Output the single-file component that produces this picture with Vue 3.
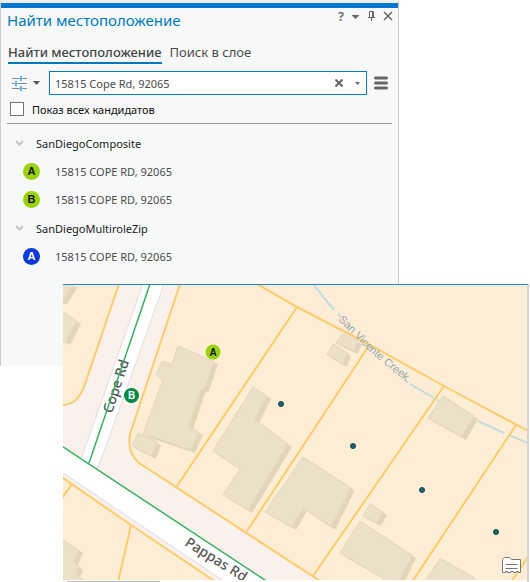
<script setup>
import { ref } from 'vue'

const query = ref('15815 Cope Rd, 92065')
const showAll = ref(false)

const groups = [
  {
    name: 'SanDiegoComposite',
    items: [
      { letter: 'A', tone: 'lime', address: '15815 COPE RD, 92065' },
      { letter: 'B', tone: 'lime', address: '15815 COPE RD, 92065' },
    ],
  },
  {
    name: 'SanDiegoMultiroleZip',
    items: [{ letter: 'A', tone: 'blue', address: '15815 COPE RD, 92065' }],
  },
]

const buildings = [
  '55,284 74,284 63,301 55,301',
  '55,307 63,312 77,321 66,342 55,336',
  '178,346 214,361 205,388 201,390 189,427 199,432 191,450 143,434 163,380 156,375 162,361 172,364',
  '138,433 157,442 152,456 132,446',
  '253,387 267,396 255,420 288,444 248,510 223,495 240,469 213,451',
  '303,457 350,487 348,493 331,527 303,508 292,527 265,512',
  '342,334 358,341 354,351 336,343',
  '333,344 347,353 343,364 327,355',
  '443,396 474,416 462,437 428,418',
  '370,504 383,512 377,523 363,516',
  '360,521 412,555 398,584 386,580 340,553',
  '440,558 473,577 480,584 424,584',
  '55,535 63,540 79,550 74,562 79,567 76,574 88,584 55,584',
]

const parcelLines = [
  'M119 284 L84 387 Q77 405 63 405',
  'M180 284 L130 434 Q127 453 139 463 L320 581',
  'M257 284 L297 307 L370 345 L444 386 L530 432',
  'M297 307 L177 486',
  'M368 347 L247 531',
  'M444 386 L313 576',
  'M516 425 L412 582',
  'M530 554 L511 582',
  'M60 476 L131 525 L216 582',
  'M72 484 L62 498',
  'M131 525 L118 582',
]

const dots = [
  [281, 404],
  [353, 446],
  [422, 490],
  [496, 532],
]
</script>

<template>
  <main class="page">
    <section class="pane">
      <header class="pane-head">
        <h1>Найти местоположение</h1>
        <div class="window-tools">
          <button type="button" class="help" aria-label="Справка">?</button>
          <button type="button" aria-label="Параметры панели">
            <svg width="9" height="12" viewBox="0 0 9 12"><path d="M0.5 5h8L4.500 9z" fill="#666" /></svg>
          </button>
          <button type="button" aria-label="Закрепить">
            <svg width="9" height="12" viewBox="0 0 9 12" fill="none" stroke="#666"><path d="M2.500 7V1.500h4V7M1 7.500h7M4.500 7.500V11" /><path d="M5.500 2v5" /></svg>
          </button>
          <button type="button" aria-label="Закрыть">
            <svg width="10" height="12" viewBox="0 0 10 12"><path d="M1 2l8 8M9 2l-8 8" stroke="#666" stroke-width="1.500" /></svg>
          </button>
        </div>
      </header>

      <nav class="tabs">
        <button type="button" class="tab active">Найти местоположение</button>
        <button type="button" class="tab">Поиск в слое</button>
      </nav>

      <div class="search-row">
        <button type="button" class="filter" aria-label="Фильтр">
          <svg width="15" height="16" viewBox="0 0 15 16">
            <path d="M0 3.500h15M0 8.500h15M0 13.500h15" stroke="#8a8a8a" />
            <path d="M9 1v5M4 6v5M9 11v5" stroke="#6ab6e2" stroke-width="2" />
            <path d="M7 3.500h4M2 8.500h4M7 13.500h4" stroke="#6ab6e2" />
          </svg>
          <svg width="7" height="4" viewBox="0 0 7 4"><path d="M0 0h7L3.500 4z" fill="#555" /></svg>
        </button>
        <div class="search-box">
          <input v-model="query" type="text" aria-label="Адрес" />
          <button type="button" aria-label="Очистить" @click="query = ''">
            <svg width="8" height="8" viewBox="0 0 8 8"><path d="M0.500 0.500l7 7M7.500 0.500l-7 7" stroke="#666" stroke-width="2" /></svg>
          </button>
          <button type="button" aria-label="История">
            <svg width="5" height="3" viewBox="0 0 5 3"><path d="M0 0h5L2.500 3z" fill="#666" /></svg>
          </button>
        </div>
        <button type="button" class="menu" aria-label="Меню">
          <svg width="14" height="14" viewBox="0 0 14 14"><path d="M1.500 2h11M1.500 7h11M1.500 12h11" stroke="#666" stroke-width="3" stroke-linecap="round" /></svg>
        </button>
      </div>

      <label class="show-all">
        <input v-model="showAll" type="checkbox" />
        <span>Показ всех кандидатов</span>
      </label>

      <div class="results">
        <section v-for="group in groups" :key="group.name">
          <h2>
            <svg width="9" height="6" viewBox="0 0 9 6"><path d="M1 1l3.500 3.500L8 1" fill="none" stroke="#c4c4c4" stroke-width="2" /></svg>
            {{ group.name }}
          </h2>
          <ul>
            <li v-for="item in group.items" :key="item.letter">
              <span class="badge" :class="item.tone">{{ item.letter }}</span>
              <span>{{ item.address }}</span>
            </li>
          </ul>
        </section>
      </div>
    </section>

    <section class="map">
      <svg class="map-canvas" viewBox="63 285 464 295" role="img" aria-label="Карта">
        <rect x="63" y="285" width="464" height="295" fill="#feedd5" />
        <path d="M119 284 L84 387 Q77 405 63 405 V476 L131 525 L216 582 H320 L139 463 Q127 453 130 434 L180 284Z" fill="#fbf1ec" />
        <path d="M143 284 L80 462 L97 470 L110 435 L164 284Z" fill="#fff" stroke="#dedede" />
        <path d="M60 445 L268 582 H225 L60 471Z" fill="#fff" />
        <path d="M60 471 L225 582" stroke="#dcdad8" fill="none" />
        <g fill="#e2d6b9">
          <polygon v-for="(points, i) in buildings" :key="i" :points="points" transform="translate(4 3)" />
        </g>
        <g fill="#ebe0c8" stroke="#e3d8bd">
          <polygon v-for="(points, i) in buildings" :key="i" :points="points" />
        </g>
        <path
          d="M313 284 L334 310 M338 314 L341 317 M405 380 L408 383 M410 384 L439 401 M478 421 L504 433 M509 435 L530 444"
          fill="none"
          stroke="#c3dddf"
          stroke-width="2"
        />
        <g fill="none" stroke="#fccb6a" stroke-width="2">
          <path v-for="line in parcelLines" :key="line" :d="line" />
        </g>

        <path id="creek" d="M338 320 L368 350 Q382 363 412 386" fill="none" />
        <text class="creek-label"><textPath href="#creek">San Vicente Creek</textPath></text>
        <text class="road-label" transform="translate(112 414) rotate(-72)">Cope Rd</text>
        <text class="road-label" transform="translate(184 545) rotate(32)">Pappas Rd</text>
        <path d="M150 284 L89 463 M60 445 L268 582" fill="none" stroke="#37b164" stroke-width="1.500" />

        <g fill="#1a6570" stroke="#173f45">
          <circle v-for="[x, y] in dots" :key="x" :cx="x" :cy="y" r="2.500" />
        </g>
        <circle cx="213" cy="352" r="7.500" fill="#9bd300" />
        <text class="pin" x="213" y="356">A</text>
        <circle cx="131.500" cy="395.500" r="7.500" fill="#008a45" />
        <text class="pin light" x="131.500" y="399">B</text>

        <g stroke="#777" fill="#fff">
          <path d="M502.500 559.500l2-2h5l2 2h9v13h-2v-1h-2v1h-3v-1h-3v1h-3v-1h-2v1h-3z" />
          <path d="M505.500 564.500h12M505.500 568.500h12" />
        </g>
      </svg>
      <div class="scroll-thumb"></div>
    </section>
  </main>
</template>

<style>
body {
  margin: 0;
  background: #fff;
}
</style>

<style scoped>
.page {
  font-family: "Noto Sans", "Open Sans", sans-serif;
  font-size: 11px;
  color: #4c4c4c;
}

button {
  display: flex;
  align-items: center;
  padding: 0;
  border: 0;
  background: none;
  font: inherit;
  color: inherit;
}

.pane {
  box-sizing: border-box;
  width: 75.3%;
  min-height: 366px;
  border: 1px solid #ccc;
  border-top: 3px solid #efefef;
  border-bottom: 0;
  background: #f7f9f8;
}

.pane-head {
  display: flex;
  justify-content: space-between;
  align-items: flex-start;
  height: 35px;
  padding: 0 5px 0 6px;
  border-top: 5px solid #0078d0;
}

h1 {
  margin: 0;
  font-size: 15px;
  font-weight: 400;
  line-height: 24px;
  color: #0079c1;
}

.window-tools {
  display: flex;
  gap: 7px;
  padding-top: 1px;
}

.help {
  font-size: 13px;
  line-height: 14px;
  font-weight: 600;
  color: #666;
}

.tabs {
  display: flex;
  gap: 8px;
  padding: 0 7px;
}

.tab {
  height: 21px;
  padding-bottom: 2px;
  font-size: 13px;
  border-bottom: 2px solid transparent;
}

.tab.active {
  border-color: #0079c1;
  color: #444;
  font-weight: 500;
}

.search-row {
  display: flex;
  align-items: center;
  padding: 7px 10px 0 11px;
}

.filter {
  gap: 6px;
  margin-right: 9px;
}

.search-box {
  display: flex;
  flex: 1;
  align-items: center;
  gap: 12px;
  box-sizing: border-box;
  height: 24px;
  padding: 0 6px 0 5px;
  border: 1px solid #0079c1;
  background: #fff;
}

.search-box input {
  flex: 1;
  min-width: 0;
  padding: 0;
  border: 0;
  outline: 0;
  background: none;
  font: inherit;
  color: inherit;
}

.menu {
  margin-left: 7px;
}

.show-all {
  display: flex;
  align-items: center;
  gap: 8px;
  height: 28px;
  margin: 0 6px;
  padding-left: 3px;
  border-bottom: 1px solid #999;
  color: #111;
}

.show-all input {
  appearance: none;
  box-sizing: border-box;
  width: 14px;
  height: 14px;
  margin: 0;
  border: 1px solid #777;
  background: #fff;
}

.results {
  padding: 5px 14px;
}

h2 {
  display: flex;
  align-items: center;
  gap: 12px;
  height: 28px;
  margin: 0;
  font-size: 11px;
  font-weight: 400;
  color: #222;
}

ul {
  margin: 0;
  padding: 0 0 1px;
  list-style: none;
}

li {
  display: flex;
  align-items: center;
  gap: 15px;
  height: 28px;
  padding-left: 8px;
}

.badge {
  width: 17px;
  border-radius: 50%;
  font: 700 11px/17px "Liberation Sans", sans-serif;
  text-align: center;
}

.lime {
  background: #9bd300;
  color: #111;
}

.blue {
  background: #0839dc;
  color: #fff;
}

.map {
  position: relative;
  box-sizing: border-box;
  margin: -82px 1px 0 63px;
  border-top: 1px solid #3381bd;
  border-right: 2px solid #d4d4d4;
}

.map-canvas {
  display: block;
  width: 100%;
}

.scroll-thumb {
  width: 20%;
  height: 1px;
  margin: 1px 0 0 4px;
  background: #b8b8b8;
}

.road-label {
  font: 500 14px "Noto Sans", sans-serif;
  fill: #555;
  stroke: #fff;
  stroke-width: 2px;
  paint-order: stroke;
}

.creek-label {
  font: 11px "Liberation Sans", sans-serif;
  fill: #94a8ad;
}

.pin {
  font: 700 10px "Liberation Sans", sans-serif;
  text-anchor: middle;
  fill: #111;
}

.pin.light {
  fill: #fff;
}
</style>
